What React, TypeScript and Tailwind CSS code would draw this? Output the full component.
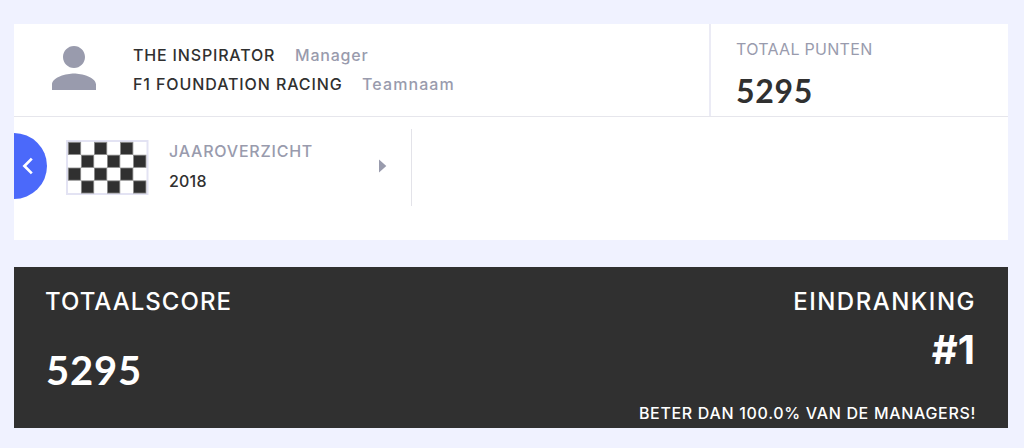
import { MdPerson } from "react-icons/md";

const ROWS = [0, 1, 2, 3];
const COLS = [0, 1, 2, 3, 4, 5];

function CheckeredFlag() {
  return (
    <svg className="ml-[19px] mt-[23px] h-[55px] w-[83px] shrink-0" viewBox="0 0 83 55">
      <rect x="1" y="1" width="80.5" height="53" fill="#fff" stroke="#e3e3f3" strokeWidth="2" />
      {ROWS.map((r) =>
        COLS.filter((c) => (c + r) % 2 === 0).map((c) => (
          <rect
            key={`${r}-${c}`}
            x={2.3 + c * 13.05}
            y={2.3 + r * 12.85}
            width="12.4"
            height="12.2"
            fill="#303030"
            stroke="#8b8b8b"
            strokeWidth="0.8"
          />
        )),
      )}
    </svg>
  );
}

export default function App() {
  return (
    <div className="h-[448px] w-[1024px] overflow-hidden bg-[#f0f2ff] pl-[14px] pt-6 font-['Inter',sans-serif] text-[16px] font-medium text-[#303030]">
      <div className="h-[216px] w-[994px] bg-white">
        <div className="flex h-[93px] border-b-[1.5px] border-[#e6e6ec]">
          <div className="flex w-[697px] border-r-2 border-[#ebebf5]">
            <MdPerson className="ml-[27px] mt-[11px] size-[66px] shrink-0 text-[#999bad]" />
            <div className="ml-[26px] mt-[17px] whitespace-nowrap leading-[29px]">
              <div className="flex">
                <span className="w-[162px] tracking-[0.83px]">THE INSPIRATOR</span>
                <span className="tracking-[0.8px] text-[#999bad]">Manager</span>
              </div>
              <div className="flex">
                <span className="w-[229px] tracking-[0.9px]">F1 FOUNDATION RACING</span>
                <span className="tracking-[1.1px] text-[#999bad]">Teamnaam</span>
              </div>
            </div>
          </div>
          <div className="ml-[25px] whitespace-nowrap">
            <div className="mt-[13px] font-normal leading-6 tracking-[0.3px] text-[#999bad]">TOTAAL PUNTEN</div>
            <div className="mt-[10px] font-['Lato',sans-serif] text-[32px] font-bold leading-10 tracking-[0.7px]">5295</div>
          </div>
        </div>
        <div className="flex h-[123px]">
          <button className="mt-4 flex h-[66px] w-[33px] items-center rounded-r-full bg-[#4b69fa]">
            <svg className="ml-2 h-[18px] w-3" viewBox="0 0 12 18" fill="none">
              <path d="M9.8 1.6 L2.4 9 L9.8 16.4" stroke="#fff" strokeWidth="2.7" />
            </svg>
          </button>
          <CheckeredFlag />
          <div className="ml-5 mt-[19px] w-[210px] whitespace-nowrap leading-[30px]">
            <div className="tracking-[0.78px] text-[#999bad]">JAAROVERZICHT</div>
            <div className="tracking-[0.2px]">2018</div>
          </div>
          <svg className="mt-[42px] h-[14px] w-2 shrink-0" viewBox="0 0 8 14">
            <path d="M0 0.5 L7.3 7 L0 13.5Z" fill="#999bad" />
          </svg>
          <div className="ml-6 mt-3 h-[77px] w-px bg-[#e3e3e9]" />
        </div>
      </div>
      <div className="mt-[27px] flex h-[161px] w-[994px] justify-between whitespace-nowrap bg-[#303030] pl-8 pr-8 text-white">
        <div>
          <div className="-ml-px mt-[19px] text-[24px] leading-8 tracking-[1.03px]">TOTAALSCORE</div>
          <div className="mt-[28px] font-['Lato',sans-serif] text-[40px] font-bold leading-[48px] tracking-[0.8px]">5295</div>
        </div>
        <div className="flex flex-col items-end">
          <div className="mt-[19px] text-[24px] leading-8 tracking-[1.5px]">EINDRANKING</div>
          <div className="mr-px mt-[8px] text-[40px] font-bold leading-[48px]">#1</div>
          <div className="mt-[27px] leading-6 tracking-[0.68px]">BETER DAN 100.0% VAN DE MANAGERS!</div>
        </div>
      </div>
    </div>
  );
}
